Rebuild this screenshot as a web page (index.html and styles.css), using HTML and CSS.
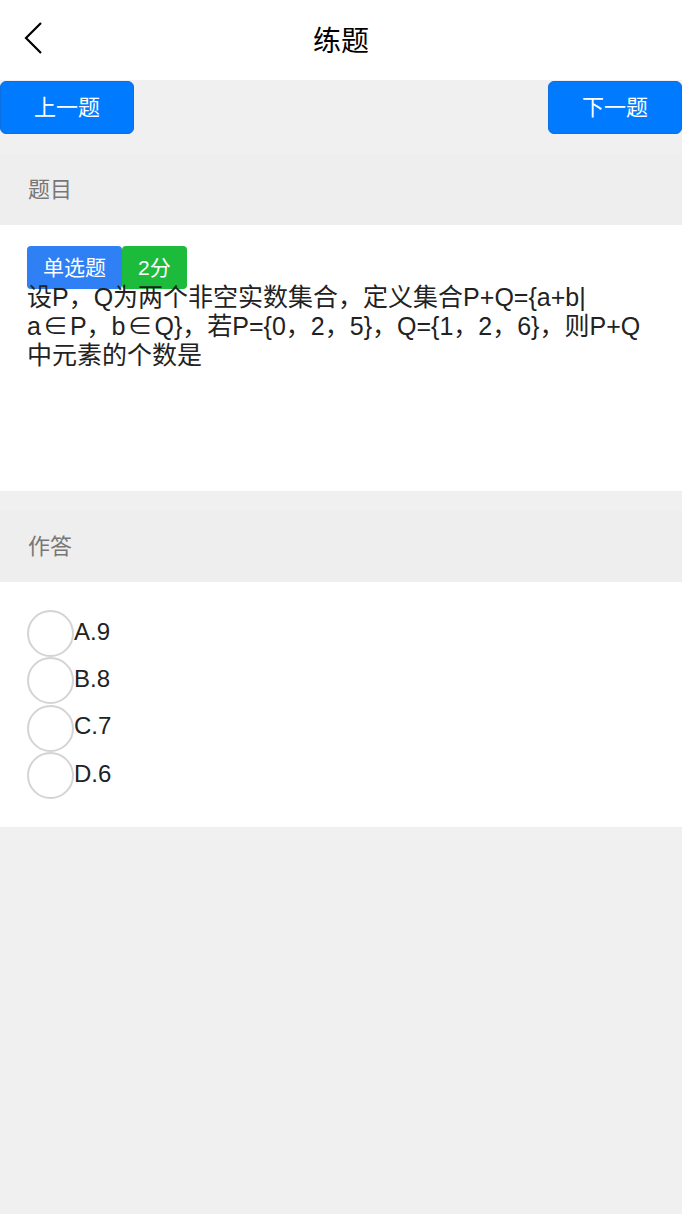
FILE: index.html
```html
<!DOCTYPE html>
<html lang="zh-CN">
  <head>
    <meta charset="UTF-8" />
    <meta name="viewport" content="width=device-width, initial-scale=1.0" />
    <title>练题</title>
    <link rel="stylesheet" href="styles.css">
  </head>
  <body>
    <header class="navbar">
      <a class="back" href="#">
        <svg width="20" height="34" viewBox="0 0 20 34">
          <polyline points="17,2 2,17 17,32" fill="none" stroke="#000" stroke-width="2.2" />
        </svg>
      </a>
      <h1>练题</h1>
    </header>

    <nav class="pager">
      <button class="btn">上一题</button>
      <button class="btn">下一题</button>
    </nav>

    <section class="block">
      <h2 class="block-title">题目</h2>
      <div class="question">
        <div class="tags">
          <span class="tag tag-type">单选题</span>
          <span class="tag tag-score">2分</span>
        </div>
        <p class="stem">设P，Q为两个非空实数集合，定义集合P+Q={a+b|<wbr>a<span class="sym">∈</span>P，b<span class="sym">∈</span>Q}，若P={0，2，5}，Q={1，2，6}，则P+Q中元素的个数是</p>
      </div>
    </section>

    <section class="block answer">
      <h2 class="block-title">作答</h2>
      <ul class="options">
        <li class="option"><span class="radio"></span>A.9</li>
        <li class="option"><span class="radio"></span>B.8</li>
        <li class="option"><span class="radio"></span>C.7</li>
        <li class="option"><span class="radio"></span>D.6</li>
      </ul>
    </section>
  </body>
</html>
```

FILE: styles.css
```css
*,
*::before,
*::after {
  box-sizing: border-box;
}

body {
  font-family: "Liberation Sans", Arial, "Noto Sans CJK SC", sans-serif;
  background: #f0f0f0;
  color: #222;
  margin: 0;
  padding: 0;
}

/* Top bar */
.navbar {
  height: 80px;
  background: #fff;
  display: flex;
  align-items: center;
  justify-content: center;
  position: relative;
}

.navbar h1 {
  margin: 0 0 2px;
  font-size: 28px;
  font-weight: normal;
  color: #000;
}

.back {
  position: absolute;
  left: 24px;
  top: 21px;
  display: flex;
}

/* Prev / next */
.pager {
  height: 74px;
  padding-top: 1px;
  display: flex;
  justify-content: space-between;
  align-items: flex-start;
}

.btn {
  width: 134px;
  height: 53px;
  background: #007aff;
  border: 1px solid #0a6fe0;
  border-radius: 6px;
  color: #fff;
  font-family: inherit;
  font-size: 22px;
  padding: 0 0 5px;
}

/* Sections */
.block-title {
  margin: 0;
  height: 71px;
  padding: 0 0 5px 28px;
  display: flex;
  align-items: center;
  background: #eee;
  color: #777;
  font-size: 22px;
  font-weight: normal;
}

.question {
  background: #fff;
  min-height: 266px;
  padding: 21px 27px;
}

.tags {
  display: flex;
  margin-bottom: -6px;
}

.tag {
  height: 43px;
  display: flex;
  align-items: center;
  padding: 0 16px 3px;
  color: #fff;
  font-size: 21px;
  border-radius: 4px;
}

.tag-type {
  background: #2f80f5;
}

.tag-score {
  background: #1cbb3c;
}

.stem {
  margin: 0;
  font-size: 25px;
  line-height: 29px;
  color: #222;
}

/* element-of sign, full width as in the CJK font */
.sym {
  font-family: "Noto Sans CJK SC", sans-serif;
  line-height: 1;
  padding: 0 2px;
}

.answer {
  margin-top: 20px;
}

.options {
  list-style: none;
  margin: 0;
  padding: 28px 27px;
  background: #fff;
}

.option {
  height: 47.3px;
  display: flex;
  align-items: center;
  padding-bottom: 4px;
  font-size: 24px;
  color: #222;
}

.radio {
  width: 47px;
  height: 47px;
  margin-top: 4px;
  border: 2px solid #d4d4d4;
  border-radius: 50%;
  flex-shrink: 0;
}
```
